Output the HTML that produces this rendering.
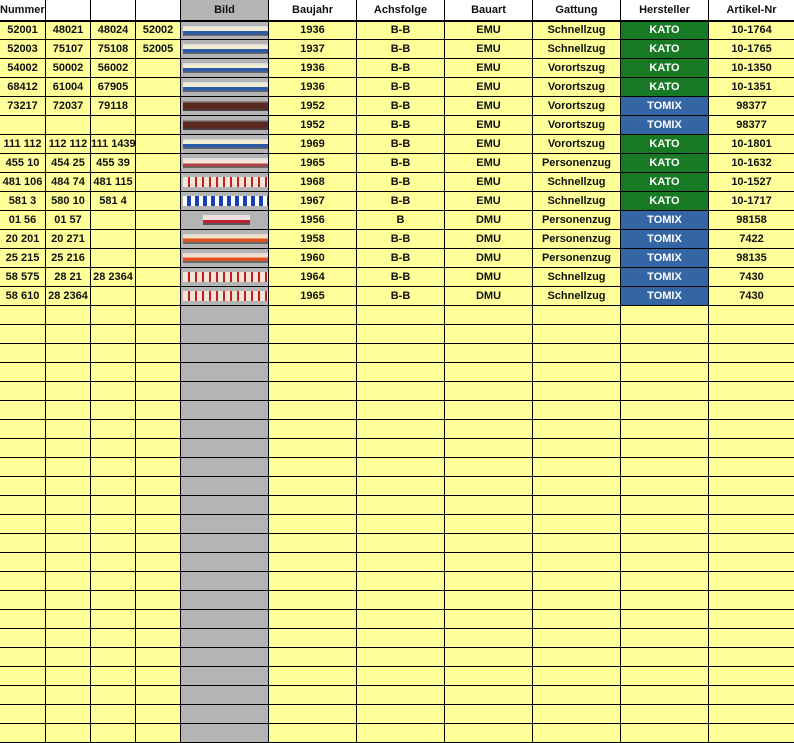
<!DOCTYPE html>
<html><head><meta charset="utf-8"><style>
*{margin:0;padding:0;box-sizing:border-box}
body{width:794px;height:722px;overflow:hidden;background:#ffff99;font-family:"Liberation Sans",sans-serif}
table{border-collapse:collapse;table-layout:fixed;width:795px;position:absolute;left:-1px;top:-1px}
td{border:1px solid #000;height:19px;font-size:11px;font-weight:bold;text-align:center;white-space:nowrap;overflow:hidden;background:#ffff99;color:#111;padding:0;line-height:17px}
tr.h td{background:#fff;height:21px;border-bottom:2px solid #000;border-top:1px solid #888;line-height:18px}
td.b{background:#b4b4b4;position:relative}
tr.h td.b{background:#b4b4b4}
td.k{background:#187a25;color:#fff}
td.t{background:#3465a4;color:#fff}
.tr{position:absolute;left:2px;right:0;top:4px;height:10px}
.bc{background:linear-gradient(#ddd 0 15%,#f2ecd0 15% 50%,#2a5aa8 50% 85%,#666 85%)}
.br{background:linear-gradient(#888 0 15%,#5a2a20 15% 85%,#444 85%)}
.rc{background:linear-gradient(#ddd 0 15%,#f3e6d8 15% 55%,#b0404a 55% 85%,#666 85%)}
.cr{background:repeating-linear-gradient(90deg,#f3e6d8 0 5px,#c02020 5px 7px)}
.bw{background:repeating-linear-gradient(90deg,#fff 0 4px,#1a3fb0 4px 8px)}
.or{background:linear-gradient(#ddd 0 15%,#f3e0c8 15% 45%,#e05020 45% 80%,#666 80%)}
.sm{left:22px;right:18px;background:linear-gradient(#f0e0e0 0 50%,#c02030 50% 80%,#555 80%)}
</style></head><body>
<table>
<colgroup><col style="width:46px"><col style="width:45px"><col style="width:45px"><col style="width:45px"><col style="width:88px"><col style="width:88px"><col style="width:88px"><col style="width:88px"><col style="width:88px"><col style="width:88px"><col style="width:86px"></colgroup>
<tr class="h"><td style="text-align:left">Nummer</td><td></td><td></td><td></td><td class="b">Bild</td><td>Baujahr</td><td>Achsfolge</td><td>Bauart</td><td>Gattung</td><td>Hersteller</td><td>Artikel-Nr</td></tr>
<tr><td>52001</td><td>48021</td><td>48024</td><td>52002</td><td class="b"><div class="tr bc"></div></td><td>1936</td><td>B-B</td><td>EMU</td><td>Schnellzug</td><td class="k">KATO</td><td>10-1764</td></tr>
<tr><td>52003</td><td>75107</td><td>75108</td><td>52005</td><td class="b"><div class="tr bc"></div></td><td>1937</td><td>B-B</td><td>EMU</td><td>Schnellzug</td><td class="k">KATO</td><td>10-1765</td></tr>
<tr><td>54002</td><td>50002</td><td>56002</td><td></td><td class="b"><div class="tr bc"></div></td><td>1936</td><td>B-B</td><td>EMU</td><td>Vorortszug</td><td class="k">KATO</td><td>10-1350</td></tr>
<tr><td>68412</td><td>61004</td><td>67905</td><td></td><td class="b"><div class="tr bc"></div></td><td>1936</td><td>B-B</td><td>EMU</td><td>Vorortszug</td><td class="k">KATO</td><td>10-1351</td></tr>
<tr><td>73217</td><td>72037</td><td>79118</td><td></td><td class="b"><div class="tr br"></div></td><td>1952</td><td>B-B</td><td>EMU</td><td>Vorortszug</td><td class="t">TOMIX</td><td>98377</td></tr>
<tr><td></td><td></td><td></td><td></td><td class="b"><div class="tr br"></div></td><td>1952</td><td>B-B</td><td>EMU</td><td>Vorortszug</td><td class="t">TOMIX</td><td>98377</td></tr>
<tr><td>111 112</td><td>112 112</td><td>111 1439</td><td></td><td class="b"><div class="tr bc"></div></td><td>1969</td><td>B-B</td><td>EMU</td><td>Vorortszug</td><td class="k">KATO</td><td>10-1801</td></tr>
<tr><td>455 10</td><td>454 25</td><td>455 39</td><td></td><td class="b"><div class="tr rc"></div></td><td>1965</td><td>B-B</td><td>EMU</td><td>Personenzug</td><td class="k">KATO</td><td>10-1632</td></tr>
<tr><td>481 106</td><td>484 74</td><td>481 115</td><td></td><td class="b"><div class="tr cr"></div></td><td>1968</td><td>B-B</td><td>EMU</td><td>Schnellzug</td><td class="k">KATO</td><td>10-1527</td></tr>
<tr><td>581 3</td><td>580 10</td><td>581 4</td><td></td><td class="b"><div class="tr bw"></div></td><td>1967</td><td>B-B</td><td>EMU</td><td>Schnellzug</td><td class="k">KATO</td><td>10-1717</td></tr>
<tr><td>01 56</td><td>01 57</td><td></td><td></td><td class="b"><div class="tr sm"></div></td><td>1956</td><td>B</td><td>DMU</td><td>Personenzug</td><td class="t">TOMIX</td><td>98158</td></tr>
<tr><td>20 201</td><td>20 271</td><td></td><td></td><td class="b"><div class="tr or"></div></td><td>1958</td><td>B-B</td><td>DMU</td><td>Personenzug</td><td class="t">TOMIX</td><td>7422</td></tr>
<tr><td>25 215</td><td>25 216</td><td></td><td></td><td class="b"><div class="tr or"></div></td><td>1960</td><td>B-B</td><td>DMU</td><td>Personenzug</td><td class="t">TOMIX</td><td>98135</td></tr>
<tr><td>58 575</td><td>28 21</td><td>28 2364</td><td></td><td class="b"><div class="tr cr"></div></td><td>1964</td><td>B-B</td><td>DMU</td><td>Schnellzug</td><td class="t">TOMIX</td><td>7430</td></tr>
<tr><td>58 610</td><td>28 2364</td><td></td><td></td><td class="b"><div class="tr cr"></div></td><td>1965</td><td>B-B</td><td>DMU</td><td>Schnellzug</td><td class="t">TOMIX</td><td>7430</td></tr>
<tr><td></td><td></td><td></td><td></td><td class="b"></td><td></td><td></td><td></td><td></td><td></td><td></td></tr>
<tr><td></td><td></td><td></td><td></td><td class="b"></td><td></td><td></td><td></td><td></td><td></td><td></td></tr>
<tr><td></td><td></td><td></td><td></td><td class="b"></td><td></td><td></td><td></td><td></td><td></td><td></td></tr>
<tr><td></td><td></td><td></td><td></td><td class="b"></td><td></td><td></td><td></td><td></td><td></td><td></td></tr>
<tr><td></td><td></td><td></td><td></td><td class="b"></td><td></td><td></td><td></td><td></td><td></td><td></td></tr>
<tr><td></td><td></td><td></td><td></td><td class="b"></td><td></td><td></td><td></td><td></td><td></td><td></td></tr>
<tr><td></td><td></td><td></td><td></td><td class="b"></td><td></td><td></td><td></td><td></td><td></td><td></td></tr>
<tr><td></td><td></td><td></td><td></td><td class="b"></td><td></td><td></td><td></td><td></td><td></td><td></td></tr>
<tr><td></td><td></td><td></td><td></td><td class="b"></td><td></td><td></td><td></td><td></td><td></td><td></td></tr>
<tr><td></td><td></td><td></td><td></td><td class="b"></td><td></td><td></td><td></td><td></td><td></td><td></td></tr>
<tr><td></td><td></td><td></td><td></td><td class="b"></td><td></td><td></td><td></td><td></td><td></td><td></td></tr>
<tr><td></td><td></td><td></td><td></td><td class="b"></td><td></td><td></td><td></td><td></td><td></td><td></td></tr>
<tr><td></td><td></td><td></td><td></td><td class="b"></td><td></td><td></td><td></td><td></td><td></td><td></td></tr>
<tr><td></td><td></td><td></td><td></td><td class="b"></td><td></td><td></td><td></td><td></td><td></td><td></td></tr>
<tr><td></td><td></td><td></td><td></td><td class="b"></td><td></td><td></td><td></td><td></td><td></td><td></td></tr>
<tr><td></td><td></td><td></td><td></td><td class="b"></td><td></td><td></td><td></td><td></td><td></td><td></td></tr>
<tr><td></td><td></td><td></td><td></td><td class="b"></td><td></td><td></td><td></td><td></td><td></td><td></td></tr>
<tr><td></td><td></td><td></td><td></td><td class="b"></td><td></td><td></td><td></td><td></td><td></td><td></td></tr>
<tr><td></td><td></td><td></td><td></td><td class="b"></td><td></td><td></td><td></td><td></td><td></td><td></td></tr>
<tr><td></td><td></td><td></td><td></td><td class="b"></td><td></td><td></td><td></td><td></td><td></td><td></td></tr>
<tr><td></td><td></td><td></td><td></td><td class="b"></td><td></td><td></td><td></td><td></td><td></td><td></td></tr>
<tr><td></td><td></td><td></td><td></td><td class="b"></td><td></td><td></td><td></td><td></td><td></td><td></td></tr>
<tr><td></td><td></td><td></td><td></td><td class="b"></td><td></td><td></td><td></td><td></td><td></td><td></td></tr>
</table>
</body></html>
